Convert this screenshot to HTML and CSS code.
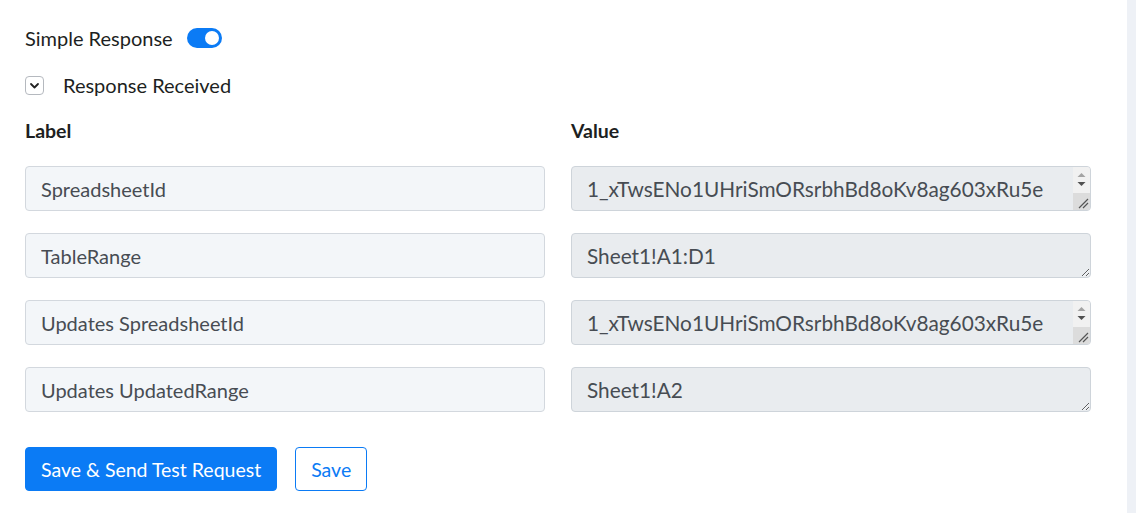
FILE: index.html
```html
<!DOCTYPE html>
<html lang="en">
<head>
    <meta charset="UTF-8">
    <meta name="viewport" content="width=device-width, initial-scale=1.0">
    <title>Response Mapping</title>
    <link rel="stylesheet" href="styles.css">
</head>
<body>
    <div class="panel">
        <!-- Response options -->
        <div class="option-row">
            <span class="option-text">Simple Response</span>
            <span class="toggle on"><span class="knob"></span></span>
        </div>

        <div class="option-row collapse-row">
            <span class="chevron-box">
                <svg width="11" height="11" viewBox="0 0 11 11"><path d="M2 4 L5.5 7.5 L9 4" fill="none" stroke="#222" stroke-width="1.8" stroke-linecap="round" stroke-linejoin="round"/></svg>
            </span>
            <span class="option-text">Response Received</span>
        </div>

        <!-- Label / value mapping -->
        <div class="mapping">
            <div class="col-head">Label</div>
            <div class="col-head">Value</div>

            <input type="text" class="label-input" value="SpreadsheetId" readonly>
            <div class="value-wrap">
                <textarea class="value-input scrolling" readonly>1_xTwsENo1UHriSmORsrbhBd8oKv8ag603xRu5e4tLkVqZp9WcM</textarea>
                <div class="scrollbar">
                    <div class="sb-track">
                        <svg width="17" height="26" viewBox="0 0 17 26">
                            <path d="M4.5 10 L8.5 6 L12.5 10 Z" fill="#a3a3a3"/>
                            <path d="M4.5 15 L8.5 19 L12.5 15 Z" fill="#505050"/>
                        </svg>
                    </div>
                    <div class="sb-corner">
                        <svg width="17" height="17" viewBox="0 0 17 17">
                            <path d="M6 15 L15 6 M10 15 L15 10" stroke="#555" stroke-width="1.2"/>
                        </svg>
                    </div>
                </div>
            </div>

            <input type="text" class="label-input" value="TableRange" readonly>
            <div class="value-wrap">
                <textarea class="value-input" readonly>Sheet1!A1:D1</textarea>
            </div>

            <input type="text" class="label-input" value="Updates SpreadsheetId" readonly>
            <div class="value-wrap">
                <textarea class="value-input scrolling" readonly>1_xTwsENo1UHriSmORsrbhBd8oKv8ag603xRu5e4tLkVqZp9WcM</textarea>
                <div class="scrollbar">
                    <div class="sb-track">
                        <svg width="17" height="26" viewBox="0 0 17 26">
                            <path d="M4.5 10 L8.5 6 L12.5 10 Z" fill="#a3a3a3"/>
                            <path d="M4.5 15 L8.5 19 L12.5 15 Z" fill="#505050"/>
                        </svg>
                    </div>
                    <div class="sb-corner">
                        <svg width="17" height="17" viewBox="0 0 17 17">
                            <path d="M6 15 L15 6 M10 15 L15 10" stroke="#555" stroke-width="1.2"/>
                        </svg>
                    </div>
                </div>
            </div>

            <input type="text" class="label-input" value="Updates UpdatedRange" readonly>
            <div class="value-wrap">
                <textarea class="value-input" readonly>Sheet1!A2</textarea>
            </div>
        </div>

        <div class="actions">
            <button class="btn btn-primary">Save &amp; Send Test Request</button>
            <button class="btn btn-outline">Save</button>
        </div>
    </div>
</body>
</html>
```

FILE: styles.css
```css
body {
    margin: 0;
    background-color: #eef1f6;
    font-family: Lato, "Open Sans", sans-serif;
    color: #1d1f22;
}
.panel {
    width: 1127px;
    height: 513px;
    box-sizing: border-box;
    background-color: white;
    padding: 26px 0 0 25px;
}
.option-row {
    display: flex;
    align-items: center;
    height: 24px;
}
.option-text {
    font-size: 20px;
}
.toggle {
    width: 35px;
    height: 20px;
    margin-left: 14px;
    border-radius: 10px;
    background-color: #d0d5db;
    display: flex;
    align-items: center;
    padding: 0 3px;
    box-sizing: border-box;
}
.toggle.on {
    background-color: #0b7bf5;
    justify-content: flex-end;
}
.knob {
    width: 14px;
    height: 14px;
    border-radius: 50%;
    background-color: white;
}
.collapse-row {
    margin-top: 23px;
}
.chevron-box {
    width: 19px;
    height: 19px;
    box-sizing: border-box;
    border: 1px solid #b5b9bf;
    border-radius: 4px;
    display: flex;
    align-items: center;
    justify-content: center;
    margin-right: 19px;
}
.mapping {
    display: grid;
    grid-template-columns: 520px 520px;
    column-gap: 26px;
    row-gap: 22px;
    margin-top: 22px;
}
.col-head {
    font-size: 19.5px;
    font-weight: bold;
    height: 24px;
    line-height: 24px;
    margin-bottom: 1px;
}
.label-input, .value-input {
    height: 45px;
    box-sizing: border-box;
    border-radius: 4px;
    font-family: Lato, "Open Sans", sans-serif;
    font-size: 20px;
    color: #474c53;
    padding: 10px 15px;
    margin: 0;
}
.label-input {
    background-color: #f3f6f9;
    border: 1px solid #d3d8de;
}
.value-wrap {
    position: relative;
    height: 45px;
}
.value-input {
    display: block;
    width: 100%;
    background-color: #e9ecef;
    border: 1px solid #ced4da;
    font-size: 20.8px;
    line-height: 36px;
    padding-top: 4px;
    padding-bottom: 4px;
    overflow: hidden;
    resize: vertical;
}
.value-input.scrolling {
    padding-right: 40px;
}
/* drawn scrollbar for the values that run over one line */
.scrollbar {
    position: absolute;
    top: 1px;
    right: 1px;
    bottom: 1px;
    width: 17px;
    display: flex;
    flex-direction: column;
    border-radius: 0 3px 3px 0;
    overflow: hidden;
    pointer-events: none;
}
.sb-track {
    flex: 1;
    background-color: #f1f1f1;
}
.sb-track svg, .sb-corner svg {
    display: block;
}
.sb-corner {
    height: 17px;
    background-color: #dcdcdc;
}
.actions {
    display: flex;
    gap: 18px;
    margin-top: 35px;
}
.btn {
    height: 44px;
    font-family: Lato, "Open Sans", sans-serif;
    font-size: 19.5px;
    border-radius: 4px;
    padding: 0 15px;
    cursor: pointer;
}
.btn-primary {
    background-color: #0b7bf5;
    border: 1px solid #0b7bf5;
    color: white;
}
.btn-outline {
    background-color: white;
    border: 1px solid #0b7bf5;
    color: #0b7bf5;
}
```
